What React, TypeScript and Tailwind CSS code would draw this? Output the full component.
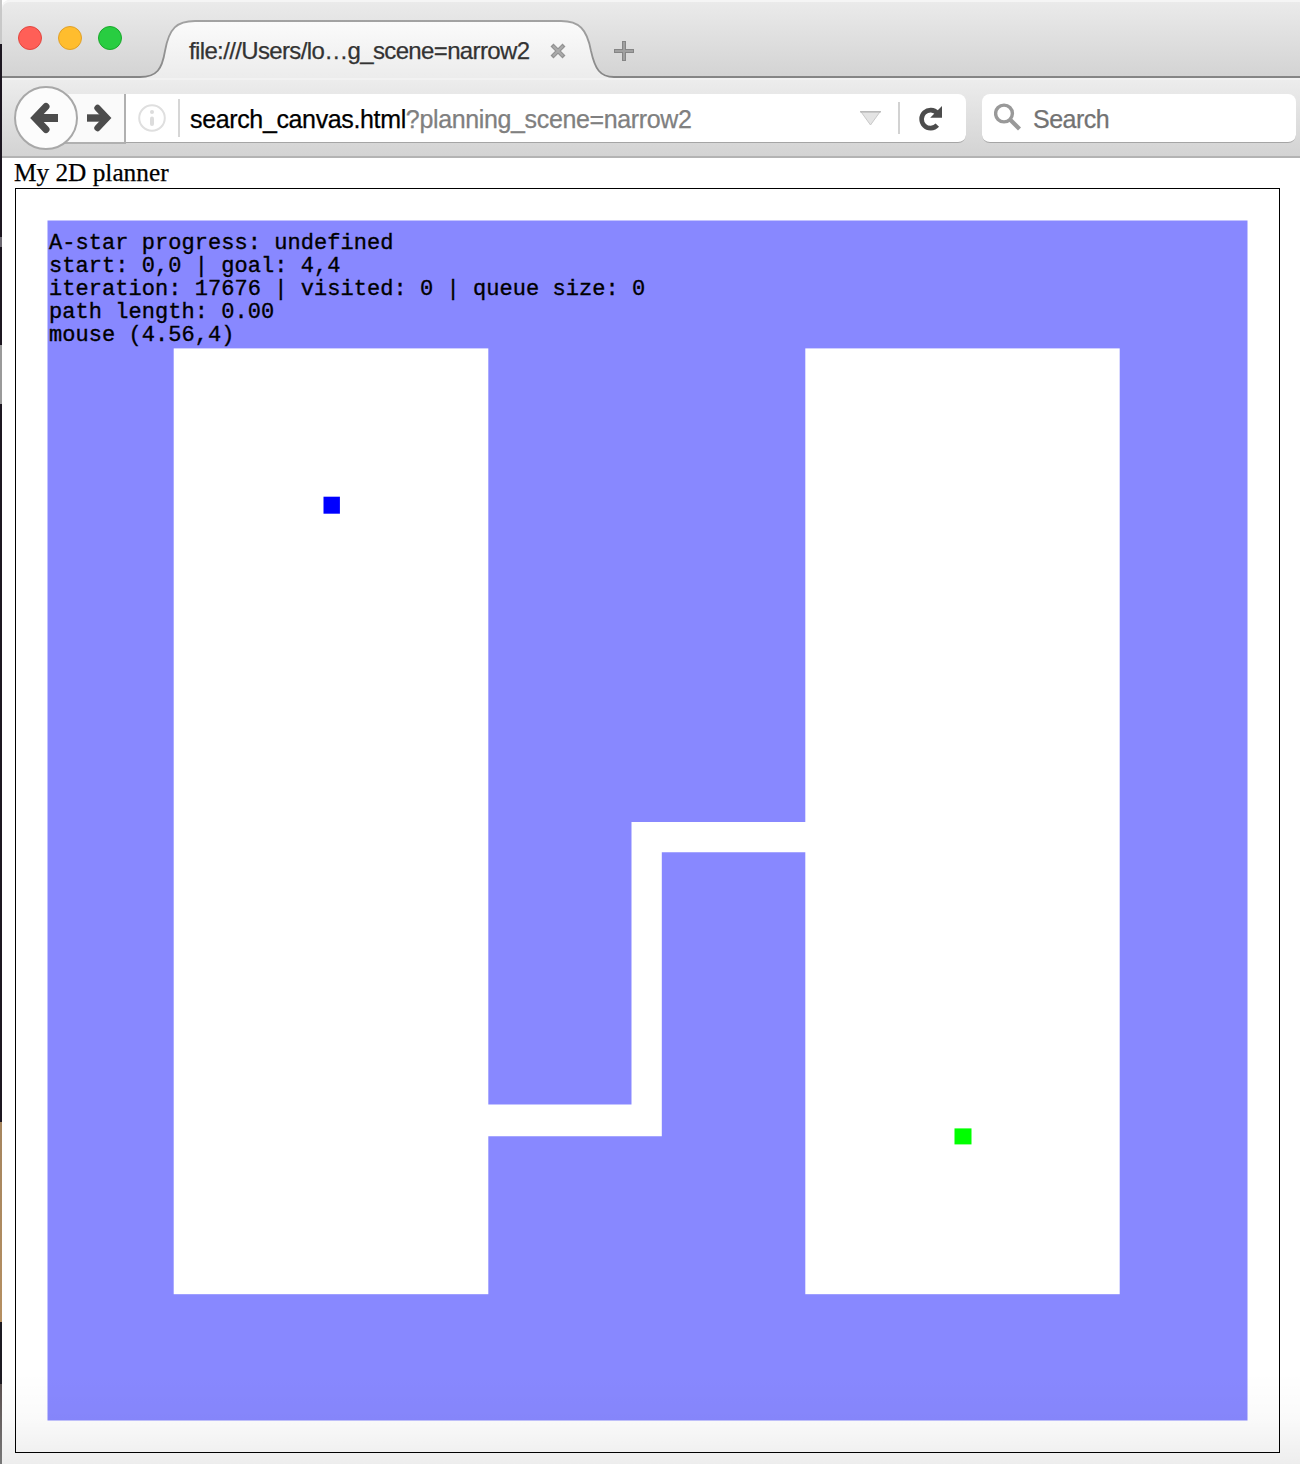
const progress = [
  'A-star progress: undefined',
  'start: 0,0 | goal: 4,4',
  'iteration: 17676 | visited: 0 | queue size: 0',
  'path length: 0.00',
  'mouse (4.56,4)',
];

function TitleBar() {
  return (
    <div className="relative flex h-[78px] rounded-tl-lg bg-linear-to-b from-[#ebebeb] to-[#d3d3d3] shadow-[inset_0_2px_0_#f5f5f5]">
      <svg className="absolute top-0 left-0" width="1298" height="78" viewBox="2 0 1298 78">
        <defs>
          <linearGradient id="tab" x1="0" y1="21" x2="0" y2="78" gradientUnits="userSpaceOnUse">
            <stop offset="0" stopColor="#fbfbfb" />
            <stop offset="1" stopColor="#ececec" />
          </linearGradient>
          <linearGradient id="edge" x1="0" y1="20" x2="0" y2="78" gradientUnits="userSpaceOnUse">
            <stop offset="0" stopColor="#a3a3a3" />
            <stop offset="1" stopColor="#858585" />
          </linearGradient>
        </defs>
        <path d="M2 77H140C157 77 162 69 165 51C169 28 177 21 195 21H561C579 21 587 29 591 51C595 69 600 77 614 77H1300V78H2Z" fill="url(#tab)" />
        <path d="M2 77H140C157 77 162 69 165 51C169 28 177 21 195 21H561C579 21 587 29 591 51C595 69 600 77 614 77H1300" fill="none" stroke="url(#edge)" strokeWidth="1.8" />
      </svg>
      <div className="relative flex h-6 w-full items-center mt-[26px] pl-4">
        <div className="flex gap-4">
          <span className="size-6 rounded-full border border-[#e2463f] bg-[#ff5f57]" />
          <span className="size-6 rounded-full border border-[#e0a028] bg-[#ffbd2e]" />
          <span className="size-6 rounded-full border border-[#19a82b] bg-[#28cd41]" />
        </div>
        <span className="mt-[26px] ml-[67px] w-[340px] text-[24px] leading-6 tracking-[-0.64px] whitespace-nowrap text-[#333] [-webkit-text-stroke:0.25px_#333]">
          file:///Users/lo…g_scene=narrow2
        </span>
        <svg className="mt-[25px] ml-[21px]" width="16" height="16" viewBox="0 0 16 16" fill="none">
          <path d="M2 2L14 14M14 2L2 14" stroke="#929292" strokeWidth="4.2" />
          <path d="M3 3L13 13M13 3L3 13" stroke="#aaa" strokeWidth="2" />
        </svg>
        <svg className="mt-[26px] ml-12" width="20" height="20" viewBox="0 0 20 20" fill="none">
          <path d="M10 0V20M0 10H20" stroke="#858585" strokeWidth="4" />
          <path d="M10 1V19M1 10H19" stroke="#a0a0a0" strokeWidth="2" />
        </svg>
      </div>
    </div>
  );
}

function Toolbar() {
  return (
    <div className="relative flex h-20 items-start border-b-2 border-[#b3b3b3] bg-linear-to-b from-[#ededed] to-[#d3d3d3] pt-4 pl-10 shadow-[inset_0_2px_0_#f2f2f2]">
      <div className="flex h-[50px] w-[84px] items-center justify-end border-r-2 border-b-2 border-[#b0b0b0] bg-[#fafafa] pr-[12px]">
        <svg width="26" height="28" viewBox="0 0 26 28" fill="none" stroke="#4c4c4c">
          <path d="M1 14H20" strokeWidth="7.4" />
          <path d="M11.5 4L21 14L11.5 24" strokeWidth="6.4" strokeLinecap="round" />
        </svg>
      </div>
      <div className="absolute top-2 left-3 flex size-16 items-center justify-center rounded-full border-2 border-[#a8a8a8] bg-[#fcfcfc]">
        <svg className="-ml-1" width="30" height="32" viewBox="0 0 30 32" fill="none" stroke="#4c4c4c">
          <path d="M8 16H29" strokeWidth="8" />
          <path d="M17 4.5L6 16L17 27.5" strokeWidth="7" strokeLinecap="round" />
        </svg>
      </div>
      <div className="flex h-[49px] w-[840px] items-center rounded-r-lg border-b border-[#a5a5a5] bg-white pl-3">
        <svg width="28" height="28" viewBox="0 0 28 28">
          <circle cx="14" cy="14" r="12.8" fill="none" stroke="#dfdfdf" strokeWidth="2" />
          <circle cx="14" cy="8" r="2" fill="#dcdcdc" />
          <path d="M14 14.5V20" stroke="#dcdcdc" strokeWidth="4" strokeLinecap="round" />
        </svg>
        <span className="ml-3 h-[38px] w-0.5 bg-[#d6d6d6]" />
        <span className="mt-px ml-[10px] w-[670px] text-[25px] leading-7 tracking-[-0.36px] whitespace-nowrap text-[#808080] [-webkit-text-stroke:0.25px]">
          <span className="text-black">search_canvas.html</span>?planning_scene=narrow2
        </span>
        <svg className="mt-px" width="21" height="15" viewBox="0 0 21 15">
          <path d="M1 .8H20L10.5 14Z" fill="#e4e4e4" stroke="#c8c8c8" />
          <path d="M0 .8H21" stroke="#b7b7b7" strokeWidth="1.4" />
        </svg>
        <span className="ml-[17px] h-8 w-0.5 bg-[#d2d2d2]" />
        <svg className="ml-[19px]" width="24" height="26" viewBox="0 0 24 26">
          <path d="M18.4 8.2A9 9 0 1 0 18.3 20.1" fill="none" stroke="#4c4c4c" strokeWidth="4.6" />
          <path d="M23 1V12.8H11.2Z" fill="#4c4c4c" />
        </svg>
      </div>
      <div className="ml-4 flex h-[49px] w-[314px] items-center rounded-lg border-b border-[#a5a5a5] bg-white pl-3">
        <svg className="-mt-0.5" width="28" height="28" viewBox="0 0 28 28" fill="none" stroke="#999">
          <circle cx="10" cy="10.5" r="8.4" strokeWidth="3.4" />
          <path d="M16 16.5L25.5 26" strokeWidth="4.2" />
        </svg>
        <span className="mt-px ml-[11px] text-[25px] leading-7 tracking-[-0.5px] text-[#737373] [-webkit-text-stroke:0.25px]">Search</span>
      </div>
    </div>
  );
}

function PlannerCanvas() {
  return (
    <div className="relative h-[1265px] w-[1265px] border border-black">
      <svg className="block" width="1263" height="1263" viewBox="16 189 1263 1263">
        <rect x="47.5" y="220.5" width="1200" height="1200" fill="#8888ff" />
        <g fill="#fff">
          <rect x="173.7" y="348.4" width="314.6" height="945.8" />
          <rect x="805.3" y="348.4" width="314.4" height="945.8" />
          <path d="M488 1104.5H631.5V822H806V852.3H661.8V1136.2H488Z" />
        </g>
        <rect x="323.5" y="496.7" width="16.4" height="17" fill="#00f" />
        <rect x="954.5" y="1128.4" width="17" height="16" fill="#0f0" />
      </svg>
      <div className="absolute top-[43px] left-[33px] font-['Liberation_Mono',monospace] text-[22px] leading-[23px] tracking-[0.05px] whitespace-pre text-black [-webkit-text-stroke:0.35px]">
        {progress.map((line) => (
          <div key={line}>{line}</div>
        ))}
      </div>
    </div>
  );
}

export default function App() {
  return (
    <div className="flex h-[1464px] w-[1300px] overflow-hidden bg-white font-['Liberation_Sans',Arial,sans-serif]">
      <div className="flex w-0.5 shrink-0 flex-col">
        <span className="h-11 bg-[#c8c8c8]" />
        <span className="h-[193px] bg-[#1c1620]" />
        <span className="h-[10px] bg-[#6b6770]" />
        <span className="h-[98px] bg-[#1c1620]" />
        <span className="h-[59px] bg-[#9a9a9a]" />
        <span className="h-[718px] bg-[#1c1620]" />
        <span className="h-[200px] bg-linear-to-b from-[#a5855e] to-[#b58f61]" />
        <span className="h-[62px] bg-[#1c1a22]" />
        <span className="h-[80px] bg-linear-to-b from-[#5b5150] to-[#777]" />
      </div>
      <div className="flex min-w-0 flex-1 flex-col">
        <TitleBar />
        <Toolbar />
        <div className="relative flex-1 pl-[13px]">
          <div className="-ml-px h-[30px] font-['Liberation_Serif',serif] text-[25.3px] leading-7 whitespace-nowrap text-black [-webkit-text-stroke:0.25px]">My 2D planner</div>
          <PlannerCanvas />
          <div className="pointer-events-none absolute inset-x-0 bottom-0 h-[92px] bg-linear-to-b from-transparent via-black/2 to-black/7" />
        </div>
      </div>
    </div>
  );
}
